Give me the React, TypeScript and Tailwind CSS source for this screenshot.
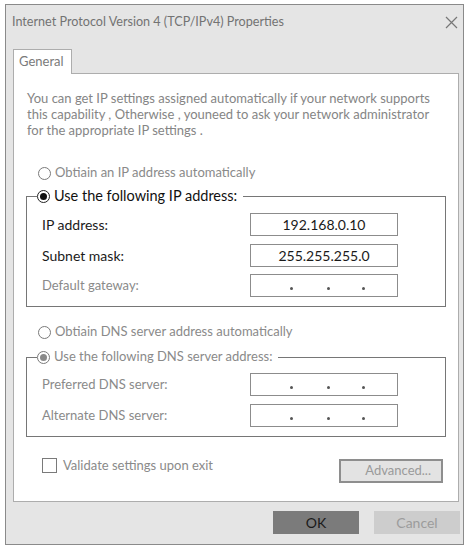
import React from "react";

const font = { fontFamily: "Lato, 'Open Sans', sans-serif" };

function Radio({ checked, tone }: { checked?: boolean; tone: "dark" | "light" }) {
  const ring = tone === "dark" ? "border-[#222]" : "border-[#7a7a7a]";
  const dot = tone === "dark" ? "bg-[#111]" : "bg-[#8a8a8a]";
  return (
    <span className={`inline-flex h-[13px] w-[13px] shrink-0 items-center justify-center rounded-full border bg-white ${ring}`}>
      {checked && <span className={`block h-[7px] w-[7px] rounded-full ${dot}`} />}
    </span>
  );
}

function IpBox({ value }: { value?: string }) {
  return (
    <div className="flex h-[23px] w-[148px] items-center justify-center border border-[#8c8c8c] bg-white text-[14px] text-[#1a1a1a]">
      {value ? (
        <span>{value}</span>
      ) : (
        <div className="flex w-full pl-[39px] pt-[5px]">
          <span className="block h-[3px] w-[3px] rounded-full bg-[#555]" />
          <span className="ml-[34px] block h-[3px] w-[3px] rounded-full bg-[#555]" />
          <span className="ml-[32px] block h-[3px] w-[3px] rounded-full bg-[#555]" />
        </div>
      )}
    </div>
  );
}

function Row({ label, value, dark, className = "" }: { label: string; value?: string; dark?: boolean; className?: string }) {
  return (
    <div className={`flex h-[23px] items-center pl-[15px] ${className}`}>
      <span className={dark ? "w-[208px] text-[14px] text-[#1a1a1a]" : "w-[208px] text-[13px] text-[#8a8a8a]"}>{label}</span>
      <IpBox value={value} />
    </div>
  );
}

export default function App() {
  return (
    <div className="h-[550px] w-[472px] bg-white pl-[5px] pt-[4px]" style={font}>
      <div className="flex h-[541px] w-[459px] flex-col border border-[#8a8a8a] bg-[#e5e5e5]">
        {/* title bar */}
        <div className="flex h-[34px] items-center pl-[6px] pr-[5px]">
          <span className="text-[12.6px] text-[#737373]">Internet Protocol Version 4 (TCP/IPv4) Properties</span>
          <svg className="ml-auto" width="13" height="13" viewBox="0 0 13 13">
            <path d="M1 1 L12 12 M12 1 L1 12" stroke="#777" strokeWidth="1.2" fill="none" />
          </svg>
        </div>

        {/* tab */}
        <div className="ml-[7px] mt-[10px] flex">
          <div className="relative z-10 -mb-px flex h-[25px] w-[59px] items-center border border-b-0 border-[#adadad] bg-white pl-[5px] text-[13px] text-[#7a7a7a]">
            General
          </div>
        </div>

        {/* panel */}
        <div className="ml-[7px] flex h-[429px] w-[446px] flex-col border border-[#adadad] bg-white">
          <p className="pl-[13px] pt-[16px] text-[13px] leading-[16px] text-[#858585]">
            You can get IP settings assigned automatically if your network supports
            <br />
            this capability , Otherwise , youneed to ask your network administrator
            <br />
            for the appropriate IP settings .
          </p>

          <div className="ml-[24px] mt-[25px] flex h-[20px] items-center gap-[4px] text-[13px] text-[#8a8a8a]">
            <Radio tone="light" />
            <span>Obtiain an IP address automatically</span>
          </div>

          <fieldset className="ml-[12px] mt-[3px] w-[420px] border border-[#767676] pb-[9px] pt-[7px]">
            <legend className="ml-[10px] flex h-[20px] items-center gap-[4px] pr-[6px] text-[14.5px] text-[#111]">
              <Radio tone="dark" checked />
              <span>Use the following IP address:</span>
            </legend>
            <Row label="IP address:" value="192.168.0.10" dark />
            <Row label="Subnet mask:" value="255.255.255.0" dark className="mt-[8px]" />
            <Row label="Default gateway:" className="mt-[7px]" />
          </fieldset>

          <div className="ml-[24px] mt-[15px] flex h-[20px] items-center gap-[4px] text-[13px] text-[#8a8a8a]">
            <Radio tone="light" />
            <span>Obtiain DNS server address automatically</span>
          </div>

          <fieldset className="ml-[12px] mt-[5px] w-[420px] border border-[#767676] pb-[9px] pt-[6px]">
            <legend className="ml-[10px] flex h-[20px] items-center gap-[4px] pr-[6px] text-[13px] text-[#8a8a8a]">
              <Radio tone="light" checked />
              <span>Use the following DNS server address:</span>
            </legend>
            <Row label="Preferred DNS server:" />
            <Row label="Alternate DNS server:" className="mt-[8px]" />
          </fieldset>

          <div className="ml-[28px] mr-[15px] mt-[21px] flex items-start">
            <span className="block h-[15px] w-[15px] border border-[#7a7a7a] bg-white" />
            <span className="ml-[6px] text-[13px] leading-[15px] text-[#8a8a8a]">Validate settings upon exit</span>
            <button className="ml-auto mt-[1px] flex h-[24px] w-[104px] items-center justify-end border-2 border-[#8e8e8e] bg-[#e3e3e3] pr-[10px] text-[13px] text-[#9a9a9a]">
              Advanced...
            </button>
          </div>
        </div>

        {/* buttons */}
        <div className="mt-[9px] flex gap-[15px] pl-[267px]">
          <button className="flex h-[23px] w-[86px] items-center justify-center bg-[#7b7b7b] text-[14px] text-[#1a1a1a]">OK</button>
          <button className="flex h-[23px] w-[86px] items-center justify-center bg-[#cdcdcd] text-[14px] text-[#9c9c9c]">Cancel</button>
        </div>
      </div>
    </div>
  );
}
